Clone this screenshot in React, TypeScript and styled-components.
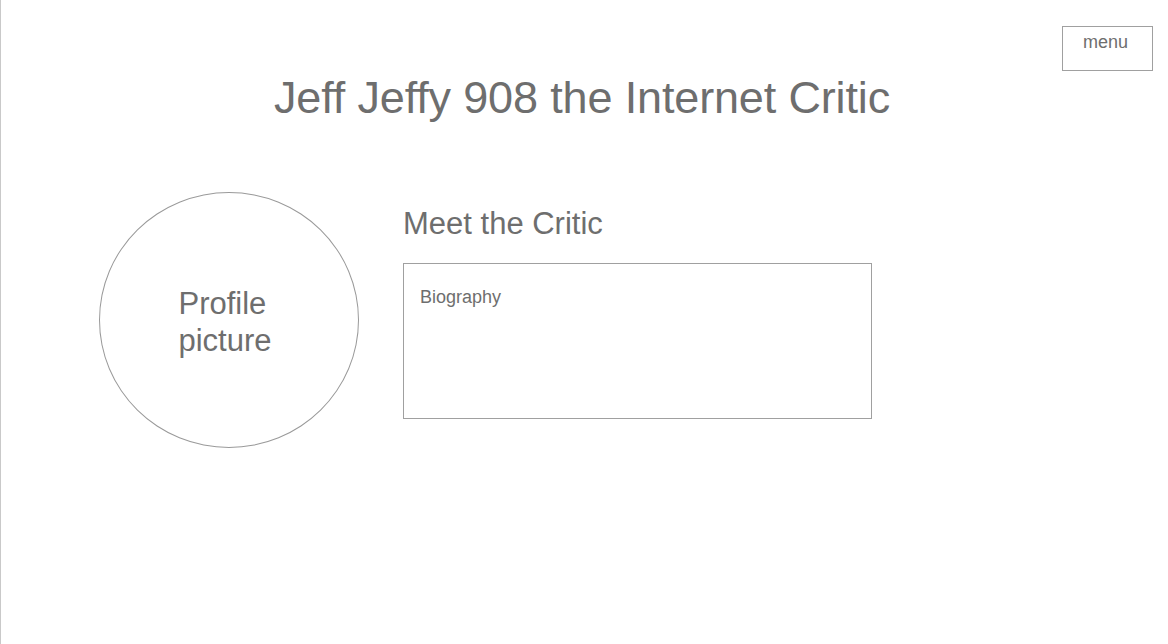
import * as React from 'react'
import styled, { createGlobalStyle } from 'styled-components'

const GlobalStyle = createGlobalStyle`
  html, body {
    margin: 0;
    padding: 0;
    background: #ffffff;
  }

  body {
    font-family: 'Liberation Sans', Arial, Helvetica, sans-serif;
    color: #6e6e6e;
  }
`

const Page = styled.div`
  box-sizing: border-box;
  width: 1168px;
  height: 644px;
  border-left: 1px solid #c9c9c9;
  overflow: hidden;
`

const Header = styled.header`
  display: grid;
  grid-template-columns: 1fr auto 1fr;
  align-items: start;
  padding: 26px 15px 0 10px;
`

const Title = styled.h1`
  grid-column: 2;
  margin: 47px 0 0;
  font-size: 45px;
  font-weight: 400;
  line-height: 50px;
  letter-spacing: -0.15px;
  white-space: nowrap;
`

const MenuButton = styled.button`
  grid-column: 3;
  justify-self: end;
  box-sizing: border-box;
  width: 91px;
  height: 45px;
  padding: 4px 4px 0 0;
  border: 1px solid #a0a0a0;
  background: #ffffff;
  color: #6e6e6e;
  font-family: inherit;
  font-size: 18px;
  line-height: 22px;
  display: flex;
  justify-content: center;
  align-items: flex-start;
`

const Main = styled.main`
  display: flex;
  align-items: flex-start;
  gap: 43px;
  padding: 69px 0 0 98px;
`

const Avatar = styled.div`
  box-sizing: border-box;
  width: 260px;
  height: 256px;
  border: 1px solid #9a9a9a;
  border-radius: 50%;
  display: flex;
  align-items: center;
  justify-content: center;
  flex-shrink: 0;
`

const AvatarLabel = styled.span`
  display: block;
  font-size: 31px;
  line-height: 37px;
  text-align: left;
  margin: 4px 8px 0 0;
`

const About = styled.section`
  display: flex;
  flex-direction: column;
  padding-top: 14px;
  margin-left: 1px;
`

const SectionTitle = styled.h2`
  margin: 0;
  font-size: 31px;
  font-weight: 400;
  line-height: 36px;
`

const BioBox = styled.div`
  box-sizing: border-box;
  width: 469px;
  height: 156px;
  margin-top: 21px;
  padding: 21px 16px;
  border: 1px solid #a0a0a0;
  font-size: 18px;
  line-height: 24px;
`

export default function App() {
  return (
    <>
      <GlobalStyle />
      <Page>
        <Header>
          <Title>Jeff Jeffy 908 the Internet Critic</Title>
          <MenuButton type="button">menu</MenuButton>
        </Header>
        <Main>
          <Avatar>
            <AvatarLabel>
              Profile
              <br />
              picture
            </AvatarLabel>
          </Avatar>
          <About>
            <SectionTitle>Meet the Critic</SectionTitle>
            <BioBox>Biography</BioBox>
          </About>
        </Main>
      </Page>
    </>
  )
}
